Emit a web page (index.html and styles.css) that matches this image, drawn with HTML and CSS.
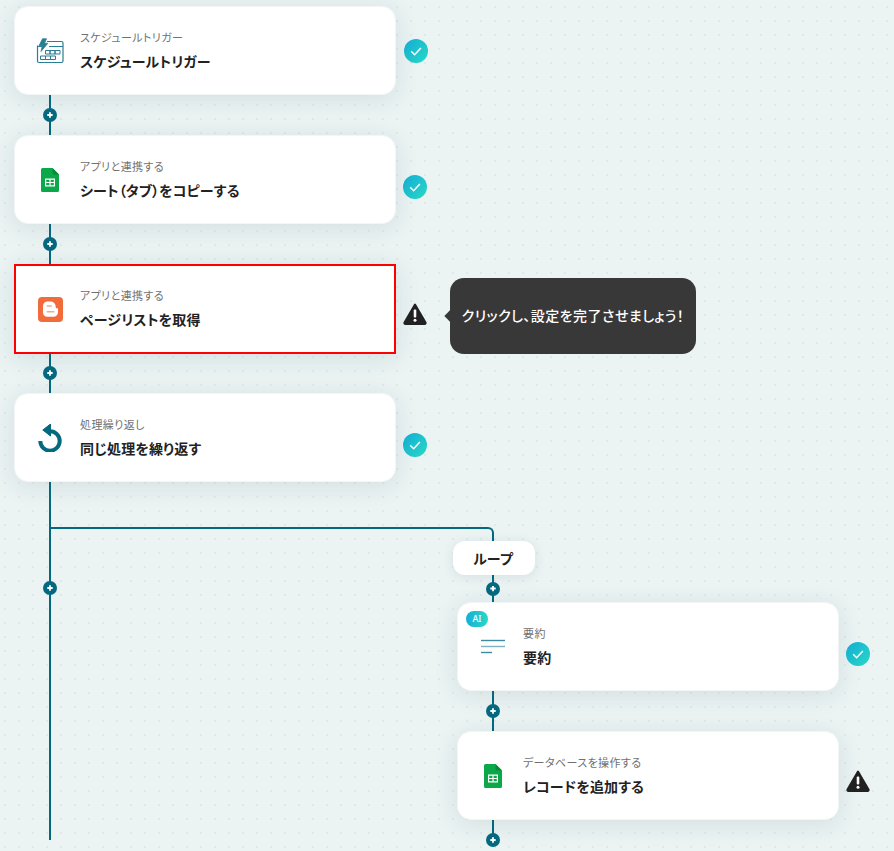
FILE: index.html
```html
<!DOCTYPE html>
<html lang="ja">
<head>
<meta charset="utf-8">
<title>フロー</title>
<link rel="stylesheet" href="styles.css">
</head>
<body>
<main class="flow">
  <section class="step">
    <article class="card">
      <div class="icon">
        <svg width="28" height="26" viewBox="0 0 28 26" fill="none" stroke="#2a7d92" stroke-width="1.200">
          <path d="M11 3.500H25.500A1.500 1.500 0 0 1 27 5V23A1.500 1.500 0 0 1 25.500 24.500H3A1.500 1.500 0 0 1 1.500 23V7.500"/>
          <path d="M13 8.500H27M1.500 8.500H6"/>
          <path d="M6.500 .8L3 7.700H6.300L5 13.500L11.800 5.300H8.500L10.500 .8Z" fill="#2a7d92" stroke-linejoin="round" stroke-width=".8"/>
          <path d="M9.500 12.500h4.500v3.500H9.500zM14 12.500h5v3.500h-5zM19 12.500h5v3.500h-5zM4.500 18h5v3.500h-5zM9.500 18h5v3.500h-5zM14.500 18h5v3.500h-5z" stroke-width="1"/>
        </svg>
      </div>
      <div class="text"><p class="label">スケジュールトリガー</p><h2 class="title">スケジュールトリガー</h2></div>
    </article>
    <span class="status status-first"><svg class="check" viewBox="0 0 24 24"><use href="#i-check"/></svg></span>
  </section>
  <div class="link"><span class="node"></span></div>

  <section class="step">
    <article class="card">
      <div class="icon"><svg class="sheet" viewBox="0 0 18 24"><use href="#i-sheet"/></svg></div>
      <div class="text"><p class="label">アプリと連携する</p><h2 class="title">シート（タブ）をコピーする</h2></div>
    </article>
    <span class="status"><svg class="check" viewBox="0 0 24 24"><use href="#i-check"/></svg></span>
  </section>
  <div class="link"><span class="node"></span></div>

  <section class="step">
    <article class="card card-error">
      <div class="icon">
        <svg width="25" height="25" viewBox="0 0 25 25">
          <rect width="25" height="25" rx="4" fill="#f26b3a"/>
          <path d="M9.500 4.500h3.200a5 5 0 0 1 5 4.800v.7c0 .9.500 1.200 1.200 1.200h.6c.3 0 .5.200.5.500v3.500a4.500 4.500 0 0 1-4.500 4.500H9.500A4.500 4.500 0 0 1 5 15.700v-6.700A4.500 4.500 0 0 1 9.500 4.500Z" fill="#fff"/>
          <rect x="8.500" y="8.300" width="5.500" height="1.500" rx=".75" fill="#f5a98c"/>
          <rect x="8.500" y="14" width="8" height="1.500" rx=".75" fill="#f5a98c"/>
        </svg>
      </div>
      <div class="text"><p class="label">アプリと連携する</p><h2 class="title">ページリストを取得</h2></div>
    </article>
    <span class="status status-warn"><svg class="warn" viewBox="0 0 24 22"><use href="#i-warn"/></svg></span>
    <div class="tooltip">クリックし、設定を完了させましょう！</div>
  </section>
  <div class="link"><span class="node"></span></div>

  <section class="step">
    <article class="card">
      <div class="icon">
        <svg width="24" height="28" viewBox="0 0 24 28" fill="none">
          <path d="M12 7.300A9.700 9.700 0 1 1 2.300 17" stroke="#04687f" stroke-width="4"/>
          <path d="M12.500 0V12L4.800 6Z" fill="#04687f" stroke="#04687f" stroke-linejoin="round"/>
        </svg>
      </div>
      <div class="text"><p class="label">処理繰り返し</p><h2 class="title">同じ処理を繰り返す</h2></div>
    </article>
    <span class="status"><svg class="check" viewBox="0 0 24 24"><use href="#i-check"/></svg></span>
  </section>

  <div class="branch">
    <div class="trunk"><span class="node"></span></div>
    <div class="elbow"></div>
    <div class="loop">
      <div class="pill">ループ</div>
      <div class="link link-short"><span class="node"></span></div>

      <section class="step">
        <article class="card">
          <span class="ai">AI</span>
          <div class="icon">
            <svg width="24" height="16" viewBox="0 0 24 16" fill="none" stroke-width="1.400">
              <path d="M0 1.500H24" stroke="#3d8ba0"/>
              <path d="M0 7.500H24" stroke="#7fb2c0"/>
              <path d="M0 13.500H11" stroke="#3d8ba0"/>
            </svg>
          </div>
          <div class="text"><p class="label">要約</p><h2 class="title">要約</h2></div>
        </article>
        <span class="status"><svg class="check" viewBox="0 0 24 24"><use href="#i-check"/></svg></span>
      </section>
      <div class="link"><span class="node"></span></div>

      <section class="step">
        <article class="card">
          <div class="icon"><svg class="sheet" viewBox="0 0 18 24"><use href="#i-sheet"/></svg></div>
          <div class="text"><p class="label">データベースを操作する</p><h2 class="title">レコードを追加する</h2></div>
        </article>
        <span class="status status-warn"><svg class="warn" viewBox="0 0 24 22"><use href="#i-warn"/></svg></span>
      </section>
      <div class="link link-end"><span class="node"></span></div>
    </div>
  </div>
</main>

<svg class="defs" width="0" height="0" aria-hidden="true">
  <defs>
    <linearGradient id="g-check" x1="0" y1="0" x2="1" y2="1">
      <stop offset="0" stop-color="#14afd8"/>
      <stop offset="1" stop-color="#29d8c4"/>
    </linearGradient>
    <symbol id="i-check" viewBox="0 0 24 24">
      <circle cx="12" cy="12" r="12" fill="url(#g-check)"/>
      <path d="M7.200 12.300L10.600 15.700L16.900 8.900" fill="none" stroke="#fff" stroke-width="1.500"/>
    </symbol>
    <symbol id="i-sheet" viewBox="0 0 18 24">
      <path d="M1.500 0H11.500L18 6.500V22.500A1.500 1.500 0 0 1 16.500 24H1.500A1.500 1.500 0 0 1 0 22.500V1.500A1.500 1.500 0 0 1 1.500 0Z" fill="#0ba84a"/>
      <path d="M11.500 0L18 6.500H13A1.500 1.500 0 0 1 11.500 5Z" fill="#078a3a"/>
      <path d="M4 10.500H14V18.500H4ZM5.200 11.700V13.900H8.400V11.700ZM9.600 11.700V13.900H12.800V11.700ZM5.200 15.100V17.300H8.400V15.100ZM9.600 15.100V17.300H12.800V15.100Z" fill="#fff" fill-rule="evenodd"/>
    </symbol>
    <symbol id="i-warn" viewBox="0 0 24 22">
      <path d="M12 1.500L22.500 19.500A1 1 0 0 1 21.600 21H2.400A1 1 0 0 1 1.500 19.500Z" fill="#222" stroke="#222" stroke-width="2" stroke-linejoin="round"/>
      <rect x="10.700" y="6.500" width="2.600" height="8" rx="1" fill="#fff"/>
      <circle cx="12" cy="17.300" r="1.500" fill="#fff"/>
    </symbol>
  </defs>
</svg>
</body>
</html>
```
FILE: styles.css
```css
* { box-sizing: border-box; }

html, body {
  margin: 0;
  height: 851px;
  overflow: hidden;
}

body {
  background-color: #ebf3f3;
  background-image: radial-gradient(circle, #e0e9ea 1px, transparent 1.1px);
  background-size: 14px 14px;
  background-position: -2px 0;
  font-family: "Noto Sans CJK JP", "Noto Sans", sans-serif;
  font-feature-settings: "palt";
  color: #222;
}

.flow {
  padding: 6px 0 0 14px;
}

.step {
  position: relative;
  display: flex;
  align-items: center;
}

.card {
  position: relative;
  flex: none;
  display: flex;
  align-items: center;
  gap: 14px;
  width: 382px;
  height: 89px;
  padding-left: 19px;
  background: #fff;
  border: 1px solid #f3f6f6;
  border-radius: 14px;
  box-shadow: 0 4px 24px rgba(40, 70, 75, .11);
}

.card-error {
  height: 90px;
  margin-bottom: -1px;
  padding-left: 18px;
  border: 2px solid #f00;
  border-radius: 0;
}

.icon {
  flex: none;
  display: flex;
  justify-content: center;
  align-items: center;
  width: 32px;
}

.sheet {
  width: 18px;
  height: 24px;
}

.text {
  min-width: 0;
  padding-bottom: 2px;
}

.label {
  margin: 0 0 6px;
  font-size: 11px;
  line-height: 16px;
  font-weight: 400;
  letter-spacing: .4px;
  color: #707070;
}

.title {
  margin: 0;
  font-size: 14px;
  line-height: 20px;
  font-weight: 700;
  letter-spacing: .17px;
  color: #222;
}

.status {
  display: flex;
  margin-left: 7px;
  margin-top: 15px;
}

.status-first {
  margin-left: 8px;
  margin-top: 1px;
}

.status-warn {
  margin-top: 10px;
}

.check {
  width: 24px;
  height: 24px;
}

.warn {
  width: 24px;
  height: 22px;
}

.tooltip {
  position: absolute;
  left: 436px;
  top: 14px;
  display: flex;
  align-items: center;
  justify-content: center;
  width: 246px;
  height: 76px;
  padding-bottom: 2px;
  border-radius: 14px;
  background: #383838;
  color: #fff;
  font-size: 14px;
  letter-spacing: .45px;
  font-weight: 500;
}

.tooltip::before {
  content: "";
  position: absolute;
  left: -4px;
  top: 34px;
  width: 8px;
  height: 8px;
  background: #383838;
  transform: rotate(45deg);
}

.link {
  display: flex;
  align-items: center;
  justify-content: center;
  width: 72px;
  height: 40px;
  background: linear-gradient(#04687f, #04687f) center / 2px 100% no-repeat;
}

.link-short {
  height: 27px;
}

.link-end {
  height: 27px;
  align-items: flex-end;
  background-position: top center;
  background-size: 2px 20px;
}

.node {
  position: relative;
  flex: none;
  width: 14px;
  height: 14px;
  border-radius: 50%;
  background: #04687f;
}

.node::before {
  content: "";
  position: absolute;
  left: 4px;
  top: 4px;
  width: 6px;
  height: 6px;
  background: #fff;
  clip-path: polygon(35% 5%, 65% 5%, 65% 35%, 95% 35%, 95% 65%, 65% 65%, 65% 95%, 35% 95%, 35% 65%, 5% 65%, 5% 35%, 35% 35%);
}

.branch {
  position: relative;
  display: flex;
}

.trunk {
  flex: none;
  display: flex;
  justify-content: center;
  width: 72px;
  height: 358px;
  padding-top: 99px;
  background: linear-gradient(#04687f, #04687f) center / 2px 100% no-repeat;
}

.elbow {
  position: absolute;
  left: 36px;
  top: 45px;
  width: 444px;
  height: 15px;
  border-top: 2px solid #04687f;
  border-right: 2px solid #04687f;
  border-top-right-radius: 6px;
}

.loop {
  position: relative;
  margin-left: 371px;
  padding-top: 59px;
}

.pill {
  display: flex;
  align-items: center;
  justify-content: center;
  width: 82px;
  height: 34px;
  margin-left: -4px;
  padding-right: 2px;
  background: #fff;
  border-radius: 12px;
  box-shadow: 0 2px 12px rgba(40, 70, 75, .1);
  font-size: 14px;
  letter-spacing: .17px;
  font-weight: 700;
}

.ai {
  position: absolute;
  left: 8px;
  top: 8px;
  width: 22px;
  height: 16px;
  border-radius: 8px;
  background: linear-gradient(90deg, #14afd8, #29d8c4);
  color: #fff;
  font-size: 9px;
  line-height: 16px;
  font-weight: 500;
  text-align: center;
  font-family: "Noto Sans", sans-serif;
}

.defs {
  position: absolute;
}
```
